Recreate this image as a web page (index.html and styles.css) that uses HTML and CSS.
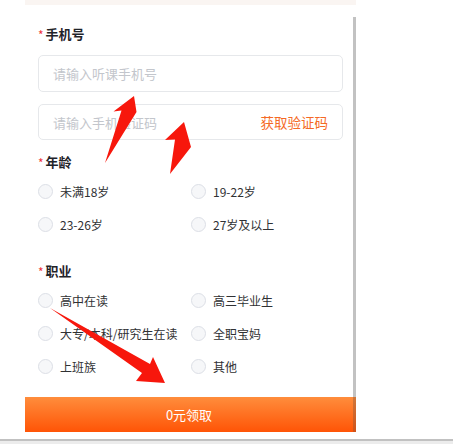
FILE: index.html
```html
<!DOCTYPE html>
<html lang="zh">
<head>
<meta charset="utf-8">
<link rel="stylesheet" href="styles.css">
</head>
<body>
<div class="frame">
  <div class="strip"></div>
  <div class="main">
    <div class="form">
      <div class="label first"><span class="star">*</span>手机号</div>
      <div class="field tall"><span class="ph">请输入听课手机号</span></div>
      <div class="field"><span class="ph">请输入手机验证码</span><span class="code">获取验证码</span></div>

      <div class="label"><span class="star">*</span>年龄</div>
      <div class="options">
        <div class="opt"><span class="radio"></span>未满18岁</div>
        <div class="opt"><span class="radio"></span>19-22岁</div>
        <div class="opt"><span class="radio"></span>23-26岁</div>
        <div class="opt"><span class="radio"></span>27岁及以上</div>
      </div>

      <div class="label gap"><span class="star">*</span>职业</div>
      <div class="options">
        <div class="opt"><span class="radio"></span>高中在读</div>
        <div class="opt"><span class="radio"></span>高三毕业生</div>
        <div class="opt"><span class="radio"></span>大专/本科/研究生在读</div>
        <div class="opt"><span class="radio"></span>全职宝妈</div>
        <div class="opt"><span class="radio"></span>上班族</div>
        <div class="opt"><span class="radio"></span>其他</div>
      </div>
    </div>
    <div class="scrollbar"></div>
  </div>
  <div class="submit">0元领取</div>
</div>
<div class="footer"></div>

<svg class="arrows" width="453" height="445" viewBox="0 0 453 445">
  <polygon points="134,96 136.5,112 105,163 121.5,110.5 113.5,111.5" fill="#f7170c"/>
  <polygon points="184,122 191,147 170,174 175,139.5 165,140" fill="#f7170c"/>
  <polygon points="50,308 150,364 153,357 165,383 136,381 142,373" fill="#f7170c"/>
</svg>
</body>
</html>
```
FILE: styles.css
```css
* { box-sizing: border-box; }
html, body { margin: 0; padding: 0; background: #fff; }
body {
  width: 453px;
  height: 445px;
  overflow: hidden;
  position: relative;
  font-family: "Noto Sans CJK SC", "Noto Sans", sans-serif;
  color: #303133;
}
.frame {
  margin-left: 25px;
  width: 331px;
}
.strip {
  height: 5px;
  background: #faf5f2;
}
.main {
  display: flex;
}
.form {
  width: 328px;
  padding: 0 10px 14px 13px;
}
.scrollbar {
  width: 3px;
  margin-top: 12px;
  background: #c2c2c2;
}
.label {
  height: 18px;
  line-height: 18px;
  font-size: 13px;
  font-weight: 700;
  color: #1f2329;
  margin-top: 13px;
  display: flex;
  align-items: center;
}
.label.first { margin-top: 20px; margin-bottom: 12px; }
.label.gap { margin-top: 21px; }
.star {
  color: #f0353a;
  font-weight: 400;
  font-size: 12px;
  margin-right: 2px;
  position: relative;
  top: 1px;
}
.field {
  height: 36px;
  border: 1px solid #e6e8eb;
  border-radius: 5px;
  display: flex;
  align-items: center;
  justify-content: space-between;
  padding: 0 14px 0 14px;
  font-size: 13px;
}
.field.tall { height: 37px; margin-bottom: 12px; }
.ph { color: #c3c6cc; }
.code { color: #f56a25; font-size: 13.5px; }
.options {
  display: grid;
  grid-template-columns: 153px 1fr;
  margin-top: 4px;
}
.opt {
  height: 33px;
  display: flex;
  align-items: center;
  font-size: 12px;
  color: #303133;
}
.radio {
  width: 15px;
  height: 15px;
  border-radius: 50%;
  border: 1px solid #dcdfe6;
  background: #f6f7f9;
  margin-right: 7px;
  flex: none;
}
.submit {
  position: relative;
  height: 35px;
  background: linear-gradient(#ff8d3c, #ff5406);
  color: #fff;
  font-size: 13px;
  display: flex;
  align-items: center;
  justify-content: center;
  padding-right: 3px;
}
.submit::after {
  content: "";
  position: absolute;
  right: 0;
  top: 0;
  bottom: 0;
  width: 3px;
  background: rgba(120, 80, 60, 0.35);
}
.footer {
  margin-top: 7px;
  height: 5px;
  border-top: 2px solid #c1c1c1;
  background: #ececec;
}
.arrows {
  position: absolute;
  left: 0;
  top: 0;
  pointer-events: none;
}
```
